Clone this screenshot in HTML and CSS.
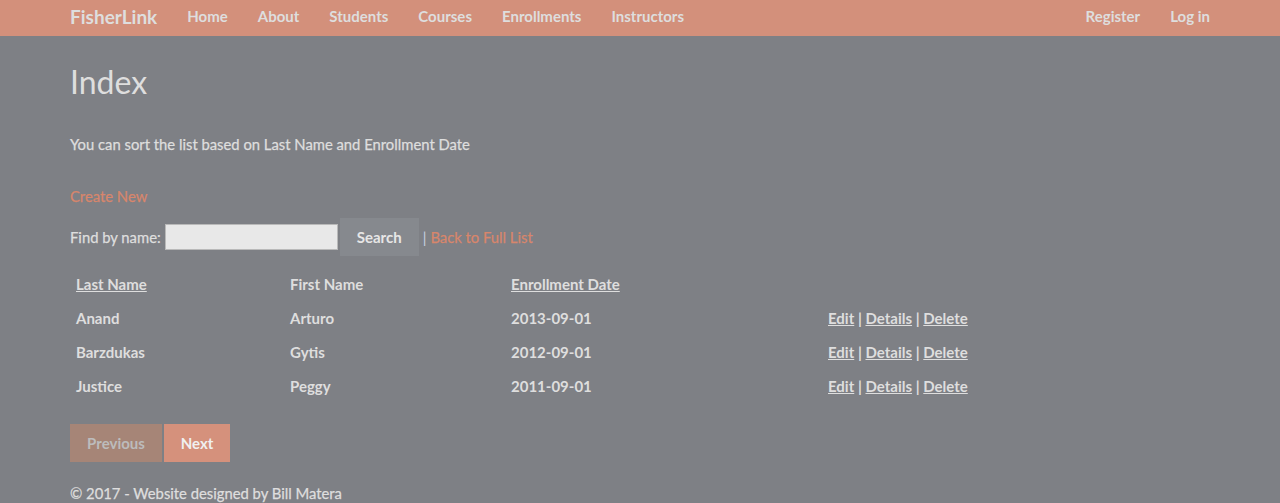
FILE: index.html
```html
<!DOCTYPE html>
<html lang="en">
<head>
<meta charset="utf-8">
<title>Index - FisherLink</title>
<link rel="stylesheet" href="styles.css">
</head>
<body>
<nav class="navbar">
  <div class="container nav-inner">
    <a class="brand" href="#">FisherLink</a>
    <ul class="nav-links">
      <li><a href="#">Home</a></li>
      <li><a href="#">About</a></li>
      <li><a href="#">Students</a></li>
      <li><a href="#">Courses</a></li>
      <li><a href="#">Enrollments</a></li>
      <li><a href="#">Instructors</a></li>
    </ul>
    <ul class="nav-links nav-right">
      <li><a href="#">Register</a></li>
      <li><a href="#">Log in</a></li>
    </ul>
  </div>
</nav>
<main class="container body-content">
  <h2 class="title">Index</h2>
  <p class="intro">You can sort the list based on Last Name and Enrollment Date</p>
  <p class="create"><a class="accent" href="#">Create New</a></p>
  <form class="search-form">
    <span>Find by name:</span>
    <input class="search-input" type="text">
    <button class="search-btn" type="button">Search</button>
    <span class="sep">|</span>
    <a class="accent" href="#">Back to Full List</a>
  </form>
  <table class="table">
    <thead>
      <tr>
        <th class="c1"><a href="#">Last Name</a></th>
        <th class="c2">First Name</th>
        <th class="c3"><a href="#">Enrollment Date</a></th>
        <th class="c4"></th>
      </tr>
    </thead>
    <tbody>
      <tr>
        <td>Anand</td><td>Arturo</td><td>2013-09-01</td>
        <td><a href="#">Edit</a> | <a href="#">Details</a> | <a href="#">Delete</a></td>
      </tr>
      <tr>
        <td>Barzdukas</td><td>Gytis</td><td>2012-09-01</td>
        <td><a href="#">Edit</a> | <a href="#">Details</a> | <a href="#">Delete</a></td>
      </tr>
      <tr>
        <td>Justice</td><td>Peggy</td><td>2011-09-01</td>
        <td><a href="#">Edit</a> | <a href="#">Details</a> | <a href="#">Delete</a></td>
      </tr>
    </tbody>
  </table>
  <div class="pager">
    <a class="btn btn-disabled" href="#">Previous</a>
    <a class="btn btn-primary" href="#">Next</a>
  </div>
  <footer class="footer">© 2017 - Website designed by Bill Matera</footer>
</main>
</body>
</html>
```
FILE: styles.css
```css
* { box-sizing: border-box; }
html, body { margin: 0; padding: 0; }
body {
  background: #7e8085;
  color: #dedede;
  font-family: Lato, "Open Sans", Arial, sans-serif;
  font-size: 14.8px;
  line-height: 1.42857;
  -webkit-text-stroke: 0.25px;
}
a { color: #dedede; text-decoration: none; }
.container {
  width: 1170px;
  margin: 0 auto;
  padding: 0 15px;
}
.navbar {
  background: #d3907b;
  height: 36px;
}
.nav-inner {
  display: flex;
  align-items: center;
  height: 36px;
  padding-bottom: 3px;
}
.brand {
  font-size: 19px;
  font-weight: 700;
  margin-right: 15px;
}
.nav-links {
  display: flex;
  list-style: none;
  margin: 0;
  padding: 0;
}
.nav-links a {
  display: block;
  padding: 0 15px;
  font-size: 15px;
  font-weight: 700;
  line-height: 33px;
  -webkit-text-stroke: 0;
}
.brand, .table, .btn, .search-btn, .title { -webkit-text-stroke: 0; }
.nav-right { margin-left: auto; margin-right: -15px; }
.title {
  font-size: 32px;
  font-weight: 400;
  margin: 28px 0 35px;
  line-height: 1.1;
}
.intro { margin: 0 0 31px; }
.create { margin: 0 0 11px; }
.accent { color: #d8866c; }
.search-form {
  display: flex;
  align-items: center;
  margin-bottom: 11px;
}
.search-input {
  width: 173px;
  height: 26px;
  margin: 0 2px 0 4px;
  background: #e8e8e8;
  border: 1px solid #b9b9b9;
}
.search-btn {
  width: 79px;
  height: 38px;
  background: #86898e;
  border: 0;
  color: #e6e6e6;
  font: 700 15px Lato, sans-serif;
  margin-right: 4px;
}
.sep { color: #c7d3e0; margin-right: 4px; -webkit-text-stroke: 0; }
.table {
  width: 100%;
  border-collapse: collapse;
  font-size: 15px;
  font-weight: 700;
}
.table th, .table td {
  padding: 6px 6px;
  text-align: left;
  height: 34px;
}
.table th { font-weight: 700; }
.table a { text-decoration: underline; }
.c1 { width: 214px; }
.c2 { width: 221px; }
.c3 { width: 317px; }
.pager {
  display: flex;
  gap: 2px;
  margin-top: 21px;
}
.btn {
  display: block;
  height: 38px;
  line-height: 38px;
  font-size: 15px;
  font-weight: 700;
  text-align: center;
}
.btn-disabled { width: 92px; background: #a68577; color: #bcbcbc; }
.btn-primary { width: 66px; background: #d5917c; color: #f0f0f0; }
.footer {
  margin-top: 21px;
}
```
